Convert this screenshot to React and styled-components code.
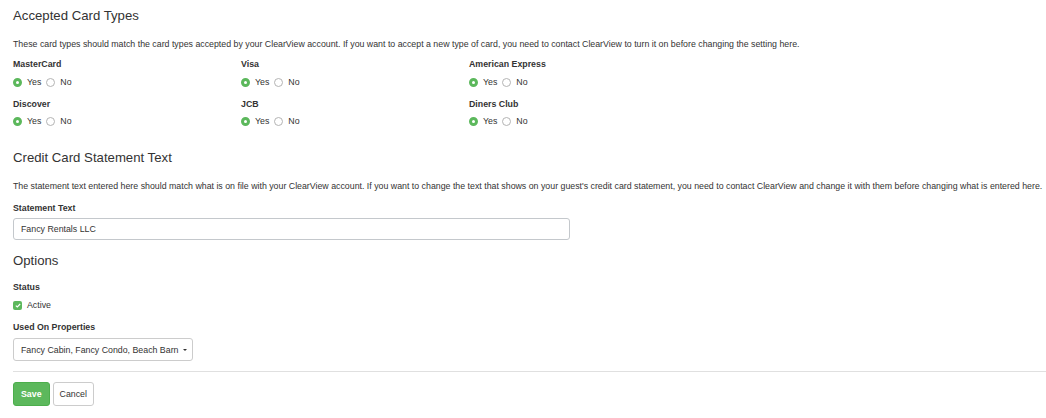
import React from "react";
import styled, { createGlobalStyle } from "styled-components";

const Global = createGlobalStyle`
  html, body { margin: 0; padding: 0; background: #fff; }
  body { font-family: "Liberation Sans", Arial, sans-serif; color: #333; font-size: 8.8px; }
  * { box-sizing: border-box; }
`;

const Page = styled.div`
  padding: 0 0 0 13px;
  width: 1046px;
`;

const Heading = styled.h3`
  margin: ${(p) => p.$mt}px 0 0 0;
  font-size: 13.2px;
  line-height: 17px;
  font-weight: 400;
  color: #333;
`;

const Help = styled.p`
  margin: ${(p) => p.$mt}px 0 0 0;
  font-size: 8.8px;
  line-height: 13px;
  white-space: nowrap;
`;

const CardGrid = styled.div`
  display: grid;
  grid-template-columns: repeat(3, 228px);
  row-gap: 9px;
  margin-top: 7px;
`;

const Group = styled.div`
  display: flex;
  flex-direction: column;
  gap: ${(p) => p.$gap ?? 5}px;
  margin-top: ${(p) => p.$mt ?? 0}px;
`;

const Label = styled.div`
  font-weight: 700;
  font-size: 8.8px;
  line-height: 13px;
`;

const RadioRow = styled.div`
  display: flex;
  align-items: center;
  height: 13px;
  gap: 5px;
`;

const Option = styled.label`
  display: flex;
  align-items: center;
  gap: 5px;
  font-size: 8.8px;
  line-height: 13px;
`;

const Radio = styled.span`
  width: 9px;
  height: 9px;
  border-radius: 50%;
  display: inline-block;
  background: #fff;
  border: ${(p) => (p.$on ? "3px solid #5cb85c" : "1px solid #b4b4b4")};
`;

const CheckBox = styled.span`
  width: 9px;
  height: 9px;
  border-radius: 2px;
  background: #5cb85c;
  display: inline-flex;
  align-items: center;
  justify-content: center;
`;

const Input = styled.div`
  width: 557px;
  height: 22px;
  border: 1px solid #c4c8cc;
  border-radius: 3px;
  display: flex;
  align-items: center;
  padding: 0 7px;
  font-size: 8.8px;
`;

const Dropdown = styled.div`
  width: 180px;
  height: 23px;
  border: 1px solid #ccc;
  border-radius: 3px;
  display: flex;
  align-items: center;
  padding: 0 7px;
  gap: 5px;
  font-size: 8.8px;
  white-space: nowrap;
`;

const Caret = styled.span`
  width: 0;
  height: 0;
  border-left: 2.5px solid transparent;
  border-right: 2.5px solid transparent;
  border-top: 2.5px solid #333;
  margin-top: 1px;
`;

const Rule = styled.hr`
  margin: 10px 0 0 0;
  border: 0;
  border-top: 1px solid #e0e0e0;
`;

const Actions = styled.div`
  display: flex;
  gap: 3px;
  margin-top: 10px;
`;

const Button = styled.button`
  height: 24px;
  padding: 0 ${(p) => (p.$primary ? 7 : 6)}px;
  border-radius: 3px;
  font-family: "Liberation Sans", Arial, sans-serif;
  font-size: 8.8px;
  font-weight: ${(p) => (p.$primary ? 700 : 400)};
  color: ${(p) => (p.$primary ? "#fff" : "#333")};
  background: ${(p) => (p.$primary ? "#5cb85c" : "#fff")};
  border: 1px solid ${(p) => (p.$primary ? "#4cae4c" : "#ccc")};
`;

const cards = ["MasterCard", "Visa", "American Express", "Discover", "JCB", "Diners Club"];

export default function App() {
  return (
    <Page>
      <Global />
      <Heading $mt={7}>Accepted Card Types</Heading>
      <Help $mt={14}>
        These card types should match the card types accepted by your ClearView account. If you want to accept a new type of card, you need to contact ClearView to turn it on before changing the setting here.
      </Help>
      <CardGrid>
        {cards.map((c) => (
          <Group key={c} $gap={4.5}>
            <Label>{c}</Label>
            <RadioRow>
              <Option><Radio $on /> Yes</Option>
              <Option><Radio /> No</Option>
            </RadioRow>
          </Group>
        ))}
      </CardGrid>

      <Heading $mt={21}>Credit Card Statement Text</Heading>
      <Help $mt={13.5}>
        The statement text entered here should match what is on file with your ClearView account. If you want to change the text that shows on your guest's credit card statement, you need to contact ClearView and change it with them before changing what is entered here.
      </Help>
      <Group $mt={9} $gap={3}>
        <Label>Statement Text</Label>
        <Input>Fancy Rentals LLC</Input>
      </Group>

      <Heading $mt={12.5}>Options</Heading>
      <Group $mt={11.5}>
        <Label>Status</Label>
        <Option>
          <CheckBox>
            <svg width="6" height="5" viewBox="0 0 6 5">
              <path d="M0.8 2.6 L2.3 4 L5.2 1" stroke="#fff" strokeWidth="1.1" fill="none" />
            </svg>
          </CheckBox>
          Active
        </Option>
      </Group>
      <Group $mt={9} $gap={4.5}>
        <Label>Used On Properties</Label>
        <Dropdown>
          Fancy Cabin, Fancy Condo, Beach Barn <Caret />
        </Dropdown>
      </Group>
      <Rule />
      <Actions>
        <Button $primary>Save</Button>
        <Button>Cancel</Button>
      </Actions>
    </Page>
  );
}
